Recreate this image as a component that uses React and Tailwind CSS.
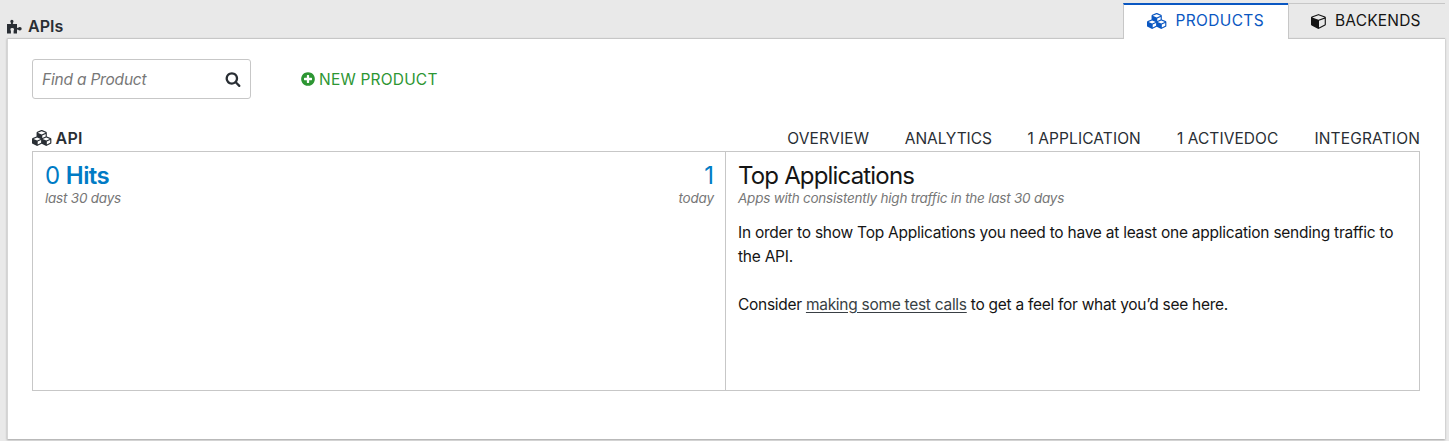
const CUBES =
  "M640 1632l384-192v-314l-384 164v342zm-64-454l404-173-404-173-404 173zm1088 454l384-192v-314l-384 164v342zm-64-454l404-173-404-173-404 173zm-448-293l384-165v-266l-384 164v267zm-64-379l441-189-441-189-441 189zm1088 518v416q0 36-19 67t-52 47l-448 224q-25 14-57 14t-57-14l-448-224q-5-2-7-4-2 2-7 4l-448 224q-25 14-57 14t-57-14l-448-224q-33-16-52-47t-19-67v-416q0-38 21.5-70t56.5-48l434-186v-400q0-38 21.5-70t56.5-48l448-192q23-10 50-10t50 10l448 192q35 16 56.5 48t21.5 70v400l434 186q36 16 57 48t21 70z";
const CUBE =
  "M896 1629l640-349v-636l-640 233v752zm-64-865l698-254-698-254-698 254zm832-252v768q0 35-18 65t-49 47l-704 384q-28 16-61 16t-61-16l-704-384q-31-17-49-47t-18-65v-768q0-40 23-73t61-50l704-256q22-8 44-8t44 8l704 256q38 17 61 50t23 73z";
const SEARCH =
  "M1216 832q0-185-131.5-316.5t-316.5-131.5-316.5 131.5-131.5 316.5 131.5 316.5 316.5 131.5 316.5-131.5 131.5-316.5zm512 832q0 52-38 90t-90 38q-54 0-90-38l-343-342q-179 124-399 124-143 0-273.5-55.5t-225-150-150-225-55.5-273.5 55.5-273.5 150-225 225-150 273.5-55.5 273.5 55.5 225 150 150 225 55.5 273.5q0 220-124 399l343 343q37 37 37 90z";
const PLUS =
  "M1344 960v-128q0-26-19-45t-45-19h-256v-256q0-26-19-45t-45-19h-128q-26 0-45 19t-19 45v256h-256q-26 0-45 19t-19 45v128q0 26 19 45t45 19h256v256q0 26 19 45t45 19h128q26 0 45-19t19-45v-256h256q26 0 45-19t19-45zm320-64q0 209-103 385.5t-279.5 279.5-385.5 103-385.5-103-279.5-279.5-103-385.5 103-385.5 279.5-279.5 385.5-103 385.5 103 279.5 279.5 103 385.5z";
const PUZZLE =
  "M0 5H3.300Q4.300 5 4.100 4.100Q3.300 3.300 3.300 2.300Q3.300 .7 4.900 .7T6.500 2.300Q6.500 3.300 5.800 4.100Q5.600 5 6.500 5H10V8Q10 9.200 10.900 8.900Q11.700 8 12.900 8Q14.700 8 14.700 9.700T12.900 11.400Q11.700 11.400 10.900 10.500Q10 10.200 10 11.400V14.500H6.600V11.900Q7 11 7 10.300Q7 8.900 5.200 8.900T3.400 10.300Q3.400 11 3.900 11.900V14.500H0z";

function Icon({ path, viewBox = "0 0 1792 1792", className }) {
  return (
    <svg viewBox={viewBox} className={className} fill="currentColor" aria-hidden="true">
      <path d={path} />
    </svg>
  );
}

function Tab({ children, className }) {
  return <li className={`flex h-9 items-center text-[15.5px] ${className}`}>{children}</li>;
}

export default function App() {
  return (
    <div className="flex h-[441px] w-[1449px] flex-col overflow-hidden bg-[#e9e9e9] pl-[7px] pr-[4px] font-['Inter',sans-serif] text-base text-[#151515]">
      <header className="relative z-10 -mb-px flex h-[39px] items-start justify-between pt-[3px]">
        <h1 className="mt-[11px] flex items-center text-[16px] font-semibold leading-6 text-[#292e34]">
          <Icon path={PUZZLE} viewBox="0 0 15 15" className="mt-px h-[15px] w-[15px]" />
          <span className="ml-[6px]">APIs</span>
        </h1>
        <ul className="flex">
          <Tab className="w-[165px] border-l border-t-2 border-l-[#c7c7c7] border-t-[#0a57c2] bg-white pb-[2px] pl-[23px] text-[#0a57c2]">
            <Icon path={CUBES} viewBox="0 0 2304 1792" className="mr-[8px] h-4 w-[20.500px]" />
            <span className="tracking-[0.35px]">PRODUCTS</span>
          </Tab>
          <Tab className="w-[157px] border border-r-0 border-[#c7c7c7] pl-[22px]">
            <Icon path={CUBE} className="mr-[8px] h-4 w-4" />
            <span className="tracking-[0.2px]">BACKENDS</span>
          </Tab>
        </ul>
      </header>

      <main className="h-[401px] shrink-0 border-l border-t border-l-[#d6d6d6] border-t-[#c7c7c7] bg-white px-6 pt-5 shadow-[0_1px_2px_rgba(0,0,0,0.3)]">
        <div className="flex h-10 items-center">
          <div className="flex h-10 w-[219px] items-center justify-between rounded-[3px] border border-[#c7c7c7] pl-[9px] pr-[9px]">
            <span className="pt-[2px] text-[15.500px] italic tracking-[-0.2px] text-[#777]">Find a Product</span>
            <Icon path={SEARCH} className="h-4 w-4 text-[#292e34]" />
          </div>
          <a className="ml-[49px] flex items-center text-[#2d9633]">
            <Icon path={PLUS} className="mr-[3px] h-4 w-4" />
            <span className="pt-[2px] text-[15.500px] tracking-[0.2px]">NEW PRODUCT</span>
          </a>
        </div>

        <div className="mt-[27px] flex h-[25px] w-[1388px] items-center justify-between text-[#292e34]">
          <h2 className="flex items-center pb-[2px] font-semibold">
            <Icon path={CUBES} viewBox="0 0 2304 1792" className="mr-[3px] h-4 w-[20.500px]" />
            <span className="tracking-[0.3px]">API</span>
          </h2>
          <nav className="flex text-[15.500px]">
            <a className="mr-[35.500px] tracking-[0.2px]">OVERVIEW</a>
            <a className="mr-[35.500px] tracking-[-0.05px]">ANALYTICS</a>
            <a className="mr-[36px] tracking-[0.1px]">1 APPLICATION</a>
            <a className="mr-[36px] tracking-[0.08px]">1 ACTIVEDOC</a>
            <a className="tracking-[0.16px]">INTEGRATION</a>
          </nav>
        </div>

        <div className="flex h-[240px] w-[1388px] border border-[#c7c7c7]">
          <section className="flex w-[693px] justify-between border-r border-[#c7c7c7] pl-3 pr-[11px] pt-[9px] text-[#007bc5]">
            <div>
              <p className="text-[24px] leading-[29px] tracking-[-0.55px]">0 <span className="font-semibold">Hits</span></p>
              <p className="text-[13.500px] italic leading-[16px] tracking-[-0.22px] text-[#777]">last 30 days</p>
            </div>
            <div className="text-right">
              <p className="text-[24px] leading-[29px]">1</p>
              <p className="text-[13.500px] italic leading-[16px] tracking-[-0.15px] text-[#777]">today</p>
            </div>
          </section>
          <section className="flex-1 pl-3 pt-[9px]">
            <h3 className="text-[24px] leading-[29px] tracking-[-0.83px]">Top Applications</h3>
            <p className="text-[13.500px] italic leading-[16px] tracking-[-0.23px] text-[#777]">Apps with consistently high traffic in the last 30 days</p>
            <p className="mt-[15px] text-[15.500px] leading-6 tracking-[-0.245px]">
              <span>In order to show Top Applications you need to have at least one application sending traffic to</span><br />
              <span>the API.</span>
            </p>
            <p className="mt-6 text-[15.500px] leading-6 tracking-[-0.28px]">
              Consider <a className="text-[#393f44] underline underline-offset-2">making some test calls</a> to get a feel for what you’d see here.
            </p>
          </section>
        </div>
      </main>
    </div>
  );
}
